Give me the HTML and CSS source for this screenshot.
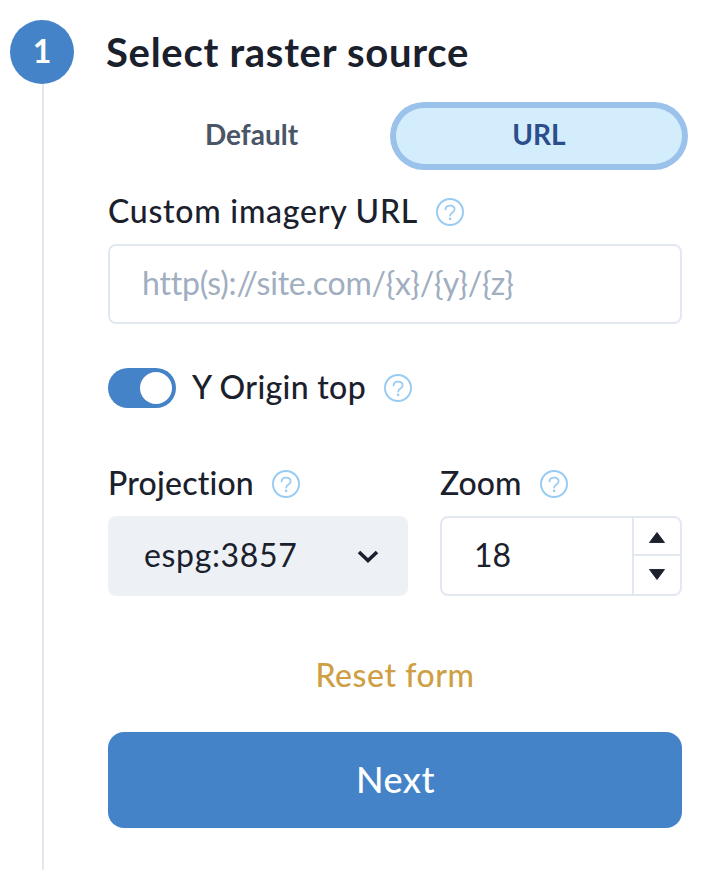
FILE: index.html
```html
<!DOCTYPE html>
<html lang="en">
<head>
<meta charset="utf-8">
<title>Select raster source</title>
<link rel="stylesheet" href="styles.css">
</head>
<body>
<svg class="defs" aria-hidden="true">
  <symbol id="help" viewBox="0 0 28 28">
    <circle cx="14" cy="14" r="13" fill="none" stroke="currentColor" stroke-width="2"/>
    <path d="M9.6 11.4C9.6 9 11.4 7.7 14 7.7s4.6 1.5 4.6 3.7c0 3.2-4.4 2.9-4.4 6.2" fill="none" stroke="currentColor" stroke-width="1.8" stroke-linecap="round" stroke-linejoin="round"/>
    <circle cx="14.1" cy="20.9" r="1.3" fill="currentColor"/>
  </symbol>
</svg>
<main class="step">
  <div class="rail">
    <div class="badge">1</div>
    <div class="line"></div>
  </div>
  <form class="content">
    <h1 class="title">Select raster source</h1>
    <div class="tabs">
      <div class="tab">Default</div>
      <div class="tab active">URL</div>
    </div>
    <div class="label url-label"><span class="text text-wide">Custom imagery URL</span><svg class="help"><use href="#help"/></svg></div>
    <div class="input">http(s)://site.com/{x}/{y}/{z}</div>
    <div class="label switch-row"><span class="switch"><span class="thumb"></span></span><span class="text text-origin">Y Origin top</span><svg class="help"><use href="#help"/></svg></div>
    <div class="fields">
      <div class="field">
        <div class="label"><span class="text text-projection">Projection</span><svg class="help"><use href="#help"/></svg></div>
        <div class="select"><span>espg:3857</span><svg class="chevron" viewBox="0 0 22 14"><path d="M2 2l9 8.6L20 2" fill="none" stroke="currentColor" stroke-width="3.6"/></svg></div>
      </div>
      <div class="field">
        <div class="label"><span class="text">Zoom</span><svg class="help help-zoom"><use href="#help"/></svg></div>
        <div class="number">
          <div class="value">18</div>
          <div class="stepper">
            <div class="arrow"><svg viewBox="0 0 16 11"><path d="M8 .5L15.5 10.5H.5z" fill="currentColor" stroke="currentColor" stroke-width=".9" stroke-linejoin="round"/></svg></div>
            <div class="arrow"><svg viewBox="0 0 16 11"><path d="M8 10.5L15.5 .5H.5z" fill="currentColor" stroke="currentColor" stroke-width=".9" stroke-linejoin="round"/></svg></div>
          </div>
        </div>
      </div>
    </div>
    <div class="reset">Reset form</div>
    <div class="next">Next</div>
  </form>
</main>
</body>
</html>
```

FILE: styles.css
```css
* { box-sizing: border-box; }
body {
  margin: 0;
  background: #fff;
  color: #1a202c;
  font-family: Lato, "Open Sans", sans-serif;
  font-size: 32px;
  font-variant-ligatures: none;
  line-height: 48px;
  white-space: nowrap;
}
.defs { display: none; }
.step {
  display: flex;
  gap: 34px;
  height: 870px;
  padding: 20px 36px 0 10px;
  overflow: hidden;
}
.rail {
  display: flex;
  flex-direction: column;
  align-items: center;
  width: 64px;
}
.badge {
  flex: none;
  width: 64px;
  height: 64px;
  border-radius: 50%;
  background: #4483c8;
  color: #fff;
  font-weight: 700;
  line-height: 62px;
  text-align: center;
}
.line {
  flex: 1;
  width: 2px;
  margin-left: 2px;
  background: #e2e8f0;
}
.content { width: 574px; }
.title {
  margin: 0 0 24px -2px;
  font-size: 40px;
  font-weight: 700;
  letter-spacing: 0.72px;
  line-height: 64px;
}
.tabs {
  display: grid;
  grid-template-columns: 287px 286px;
  gap: 1px;
  height: 56px;
}
.tab {
  color: #4a5568;
  font-size: 28px;
  font-weight: 700;
  line-height: 53px;
  text-align: center;
}
.tab.active {
  border-radius: 28px;
  background: #d4edfc;
  box-shadow: 0 0 0 6px #9bc2eb;
  color: #2a4f8c;
}
.label {
  display: flex;
  align-items: center;
  height: 48px;
  font-weight: 500;
}
.text { margin-top: -2px; }
.text-wide { letter-spacing: 0.75px; }
.text-origin { letter-spacing: 0.33px; }
.text-projection { letter-spacing: 0.2px; }
.url-label { margin-top: 24px; }
.help {
  width: 28px;
  height: 28px;
  margin-left: 18px;
  color: #9accf2;
}
.help-zoom { margin-left: 19px; }
.input {
  height: 80px;
  margin-top: 8px;
  padding: 13px 32px;
  border: 2px solid #e2e8f0;
  border-radius: 8px;
  color: #a0aec0;
  letter-spacing: -0.22px;
}
.switch-row { margin-top: 40px; }
.switch {
  width: 68px;
  height: 40px;
  margin-right: 16px;
  padding: 4px;
  border-radius: 20px;
  background: #4483c8;
}
.thumb {
  display: block;
  width: 32px;
  height: 32px;
  margin-left: 28px;
  border-radius: 50%;
  background: #fff;
}
.fields {
  display: grid;
  grid-template-columns: 300px 242px;
  gap: 32px;
  margin-top: 48px;
}
.select {
  display: flex;
  align-items: center;
  justify-content: space-between;
  height: 80px;
  margin-top: 8px;
  padding: 0 29px 2px 36px;
  border-radius: 8px;
  background: #edf1f6;
  letter-spacing: 0.65px;
}
.chevron {
  width: 22px;
  height: 14px;
  margin-top: 3px;
}
.number {
  display: flex;
  height: 80px;
  margin-top: 8px;
  border: 2px solid #e2e8f0;
  border-radius: 8px;
}
.value {
  flex: 1;
  padding: 13px 32px;
}
.stepper {
  display: grid;
  grid-template-rows: 36px 40px;
  width: 48px;
  border-left: 2px solid #e2e8f0;
}
.arrow {
  display: flex;
  align-items: center;
  justify-content: center;
  padding-top: 2px;
}
.arrow + .arrow {
  padding: 0 0 1px;
  border-top: 2px solid #e2e8f0;
}
.arrow svg {
  width: 16px;
  height: 11px;
}
.reset {
  height: 48px;
  margin-top: 56px;
  color: #cf9f45;
  font-weight: 500;
  letter-spacing: 0.55px;
  line-height: 46px;
  text-align: center;
}
.next {
  height: 96px;
  margin-top: 32px;
  padding-left: 1px;
  border-radius: 16px;
  background: #4483c8;
  color: #fff;
  font-size: 36px;
  font-weight: 500;
  letter-spacing: 0.5px;
  line-height: 95px;
  text-align: center;
}
```
